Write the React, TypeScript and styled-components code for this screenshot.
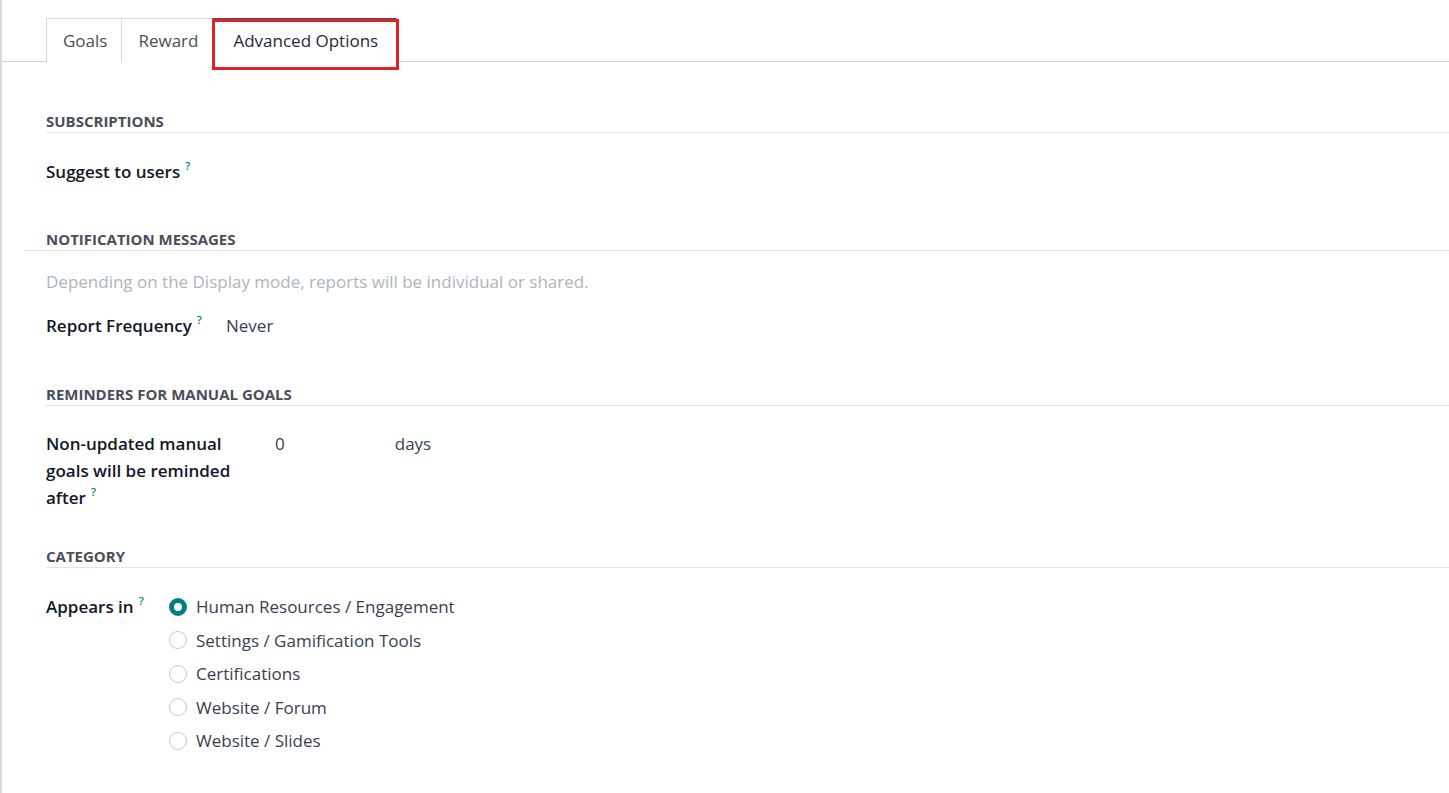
import React from 'react';
import styled, { createGlobalStyle } from 'styled-components';

const GlobalStyle = createGlobalStyle`
  html, body { margin: 0; padding: 0; background: #fff; }
  body { font-family: "Open Sans", "Noto Sans", sans-serif; color: #212529; }
`;

const Sheet = styled.div`
  min-height: 793px;
  border-left: 2px solid #d8dadd;
  box-sizing: border-box;
`;

const TabBar = styled.div`
  display: flex;
  padding: 18px 0 0 45px;
  border-bottom: 1px solid #d0d2d6;
`;

const Tab = styled.div<{ $active?: boolean }>`
  position: relative;
  height: 44px;
  box-sizing: border-box;
  display: flex;
  align-items: center;
  padding: 0 ${p => (p.$active ? '18px 0 20px' : '14px 0 16px')};
  font-size: 17px;
  color: ${p => (p.$active ? '#1f2937' : '#4a4f59')};
  border: 1px solid #d8dadd;
  border-bottom: none;
  margin-left: -1px;
  margin-bottom: -1px;
  background: #fff;
  ${p => p.$active && 'border-top-color: #4a4f59;'}
`;

const Highlight = styled.span`
  position: absolute;
  left: -1px;
  right: -3px;
  top: 0;
  bottom: -8px;
  border: 3px solid #e3202a;
  pointer-events: none;
`;

const Body = styled.div`
  padding: 49px 0 0 44px;
`;

const Section = styled.section<{ $after?: number }>`
  margin-bottom: ${p => p.$after ?? 44}px;
`;

const SectionTitle = styled.h3<{ $wide?: boolean }>`
  margin: 0;
  font-size: 15px;
  font-weight: 700;
  color: #4a4f59;
  text-transform: uppercase;
  line-height: 20px;
  padding-bottom: 1px;
  border-bottom: 1px solid #e2e4e7;
  ${p => p.$wide && 'margin-left: -22px; padding-left: 22px;'}
`;

const Hint = styled.div`
  margin-top: 19px;
  font-size: 17px;
  line-height: 24px;
  color: #adb5bd;
`;

const Field = styled.div<{ $labelWidth: number; $top?: number }>`
  display: grid;
  grid-template-columns: ${p => p.$labelWidth}px auto;
  align-items: start;
  margin-top: ${p => p.$top ?? 25}px;
  font-size: 17px;
  line-height: 27px;
`;

const Label = styled.div<{ $gutter?: number }>`
  font-weight: 600;
  color: #111827;
  padding-right: ${p => p.$gutter ?? 0}px;
`;

const Help = styled.span`
  position: relative;
  top: -8px;
  font-size: 11px;
  line-height: 1;
  color: #017e84;
  margin-left: 5px;
`;

const Value = styled.div`
  color: #374151;
  display: flex;
`;

const Days = styled.span`
  margin-left: 110px;
`;

const Radios = styled.div`
  display: flex;
  flex-direction: column;
  gap: 6.5px;
`;

const RadioRow = styled.label`
  display: flex;
  align-items: center;
  gap: 9px;
  color: #374151;
  font-weight: 500;
`;

const Dot = styled.span<{ $checked?: boolean }>`
  width: 18px;
  height: 18px;
  box-sizing: border-box;
  border-radius: 50%;
  flex: none;
  border: ${p => (p.$checked ? '5px solid #017e84' : '1px solid #c4c7cc')};
  background: #fff;
`;

const categories = [
  'Human Resources / Engagement',
  'Settings / Gamification Tools',
  'Certifications',
  'Website / Forum',
  'Website / Slides',
];

export default function App() {
  return (
    <>
      <GlobalStyle />
      <Sheet>
        <TabBar>
          <Tab>Goals</Tab>
          <Tab>Reward</Tab>
          <Tab $active>
            Advanced Options
            <Highlight />
          </Tab>
        </TabBar>
        <Body>
          <Section>
            <SectionTitle>Subscriptions</SectionTitle>
            <Field $labelWidth={180}>
              <Label>Suggest to users<Help>?</Help></Label>
            </Field>
          </Section>

          <Section $after={45}>
            <SectionTitle $wide>Notification Messages</SectionTitle>
            <Hint>Depending on the Display mode, reports will be individual or shared.</Hint>
            <Field $labelWidth={180} $top={18}>
              <Label>Report Frequency<Help>?</Help></Label>
              <Value>Never</Value>
            </Field>
          </Section>

          <Section $after={35}>
            <SectionTitle>Reminders for manual goals</SectionTitle>
            <Field $labelWidth={229} $top={24}>
              <Label $gutter={34}>Non-updated manual goals will be reminded after<Help>?</Help></Label>
              <Value>0<Days>days</Days></Value>
            </Field>
          </Section>

          <Section>
            <SectionTitle>Category</SectionTitle>
            <Field $labelWidth={123}>
              <Label>Appears in<Help>?</Help></Label>
              <Radios>
                {categories.map((c, i) => (
                  <RadioRow key={c}>
                    <Dot $checked={i === 0} />
                    {c}
                  </RadioRow>
                ))}
              </Radios>
            </Field>
          </Section>
        </Body>
      </Sheet>
    </>
  );
}
